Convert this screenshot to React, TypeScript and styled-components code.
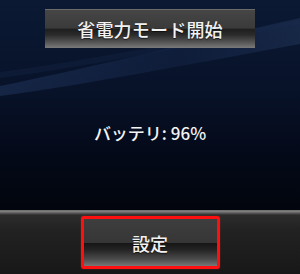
import React from "react";
import styled, { createGlobalStyle } from "styled-components";

const Global = createGlobalStyle`
  html, body { margin: 0; padding: 0; background: #050a18; }
  body { font-family: "Noto Sans CJK JP", "Noto Sans", sans-serif; }
`;

const Screen = styled.div`
  width: 300px;
  height: 274px;
  display: flex;
  flex-direction: column;
  overflow: hidden;
  position: relative;
`;

const Main = styled.div`
  position: relative;
  height: 210px;
  display: flex;
  flex-direction: column;
  align-items: center;
  background: linear-gradient(180deg, #0b1933 0%, #08132a 40%, #040918 75%, #02050d 100%);
`;

const Wave = styled.svg`
  position: absolute;
  inset: 0;
  width: 300px;
  height: 210px;
  pointer-events: none;
`;

const GlossButton = styled.div`
  position: relative;
  box-sizing: border-box;
  width: 210px;
  height: 39px;
  margin-top: 9px;
  display: flex;
  align-items: center;
  justify-content: center;
  color: #f2f2f2;
  font-size: 18px;
  font-weight: 500;
  letter-spacing: 0.2px;
  border-top: 1px solid #6a6a6a;
  background: linear-gradient(
    180deg,
    #464646 0%,
    #3a3a3a 48%,
    #1e1e1e 50%,
    #2a2a2a 65%,
    #555 85%,
    #7a7a7a 100%
  );
  text-shadow: 0 1px 1px rgba(0, 0, 0, 0.6);
`;

const Battery = styled.div`
  position: relative;
  margin-top: 75px;
  color: #f4f4f4;
  font-size: 17px;
  font-weight: 500;
  line-height: 20px;
`;

const BottomBar = styled.div`
  height: 64px;
  display: flex;
  justify-content: center;
  align-items: flex-start;
  box-sizing: border-box;
  padding-top: 6px;
  background: linear-gradient(
    180deg,
    #5a5a5a 0px,
    #8a8a8a 1px,
    #5a5a5a 3px,
    #2c2c2c 5px,
    #222 20px,
    #181818 100%
  );
`;

const Highlight = styled.div`
  box-sizing: border-box;
  width: 139px;
  height: 53px;
  border: 3px solid #ff1010;
  border-radius: 3px;
  box-shadow: 0 0 1px #ff3030;
  display: flex;
  align-items: center;
  justify-content: center;
  color: #f2f2f2;
  font-size: 18px;
  font-weight: 500;
  background: linear-gradient(
    180deg,
    #3e3e3e 0%,
    #363636 50%,
    #161616 52%,
    #232323 65%,
    #4a4a4a 85%,
    #777 100%
  );
  text-shadow: 0 1px 1px rgba(0, 0, 0, 0.6);
`;

export default function App() {
  return (
    <>
      <Global />
      <Screen>
        <Main>
          <Wave viewBox="0 0 300 210" preserveAspectRatio="none">
            <defs>
              <linearGradient id="w1" x1="0" y1="0" x2="1" y2="0">
                <stop offset="0" stopColor="#2a4270" stopOpacity="0.4" />
                <stop offset="0.6" stopColor="#1c3058" stopOpacity="0.3" />
                <stop offset="1" stopColor="#2a4068" stopOpacity="0.4" />
              </linearGradient>
            </defs>
            <path d="M0 86 C 80 70, 180 45, 300 18 L300 44 C 190 64, 90 84, 0 96 Z" fill="url(#w1)" />
            <path d="M0 72 C 90 60, 190 40, 300 20 L300 24 C 190 46, 90 66, 0 78 Z" fill="#1a2c50" fillOpacity="0.3" />
          </Wave>
          <GlossButton>省電力モード開始</GlossButton>
          <Battery>バッテリ: 96%</Battery>
        </Main>
        <BottomBar>
          <Highlight>設定</Highlight>
        </BottomBar>
      </Screen>
    </>
  );
}
